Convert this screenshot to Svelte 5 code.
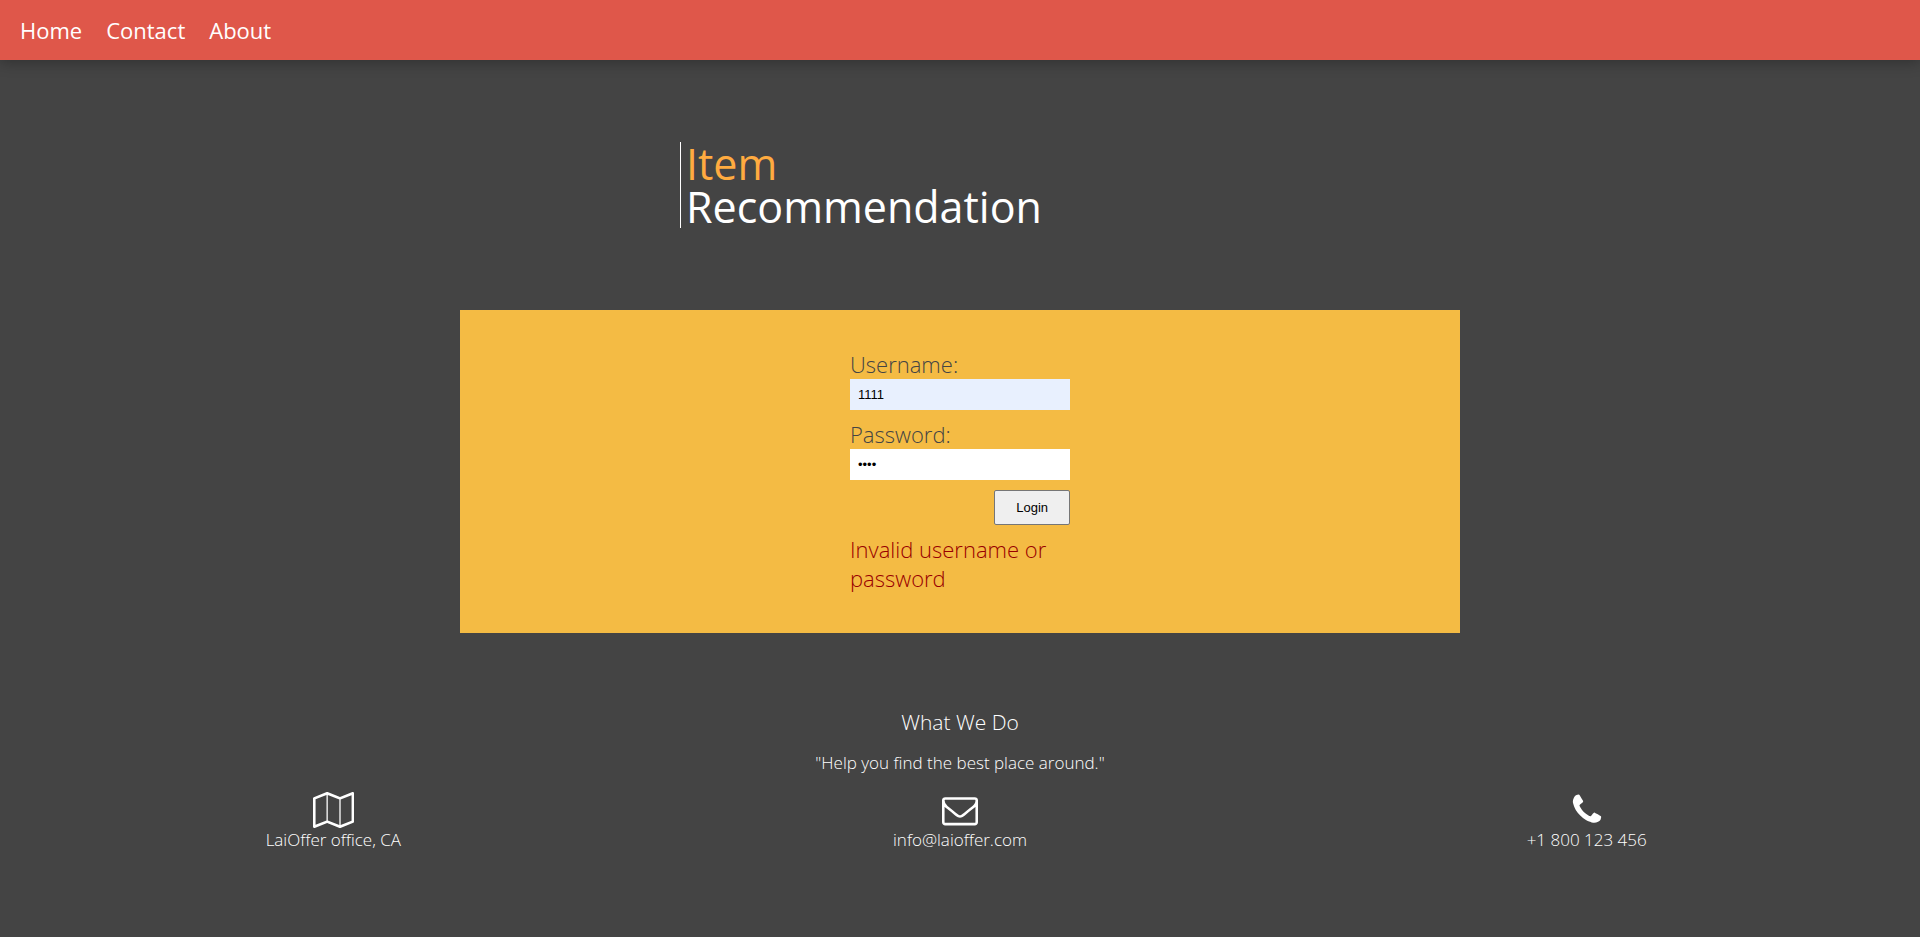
<script>
  let username = $state('1111');
  let password = $state('1111');
  const links = ['Home', 'Contact', 'About'];
  const contacts = [
    {
      text: 'LaiOffer office, CA',
      viewBox: '0 0 2048 1792',
      path: 'M2020 11q28 20 28 53v1408q0 20-11 36t-29 23l-640 256q-24 11-48 0l-616-246-616 246q-10 5-24 5-19 0-36-11-28-20-28-53v-1408q0-20 11-36t29-23l640-256q24-11 48 0l616 246 616-246q32-13 60 6zm-1284 135v1270l576 230v-1270zm-608 217v1270l544-217v-1270zm1792 1066v-1270l-544 217v1270z'
    },
    {
      text: 'info@laioffer.com',
      viewBox: '0 0 1792 1792',
      path: 'M1664 1504v-768q-32 36-69 66-268 206-426 338-51 43-83 67t-86.500 48.500-102.500 24.500h-2q-48 0-102.500-24.500t-86.500-48.500-83-67q-158-132-426-338-37-30-69-66v768q0 13 9.500 22.500t22.500 9.500h1472q13 0 22.500-9.500t9.500-22.500zm0-1051v-24.500l-.5-13-3-12.500-5.500-9-9-7.500-14-2.500h-1472q-13 0-22.500 9.500t-9.500 22.500q0 168 147 284 193 152 401 317 6 5 35 29.500t46 37.500 44.500 31.500 50.500 27.500 43 9h2q20 0 43-9t50.500-27.500 44.500-31.500 46-37.500 35-29.500q208-165 401-317 54-43 100.500-115.500t46.500-131.500zm128-37v1088q0 66-47 113t-113 47h-1472q-66 0-113-47t-47-113v-1088q0-66 47-113t113-47h1472q66 0 113 47t47 113z'
    },
    {
      text: '+1 800 123 456',
      viewBox: '0 0 1792 1792',
      path: 'M1600 1240q0 27-10 70.500t-21 68.500q-21 50-122 106-94 51-186 51-27 0-52.500-3.500t-57.500-12.500-47.500-14.500-55.500-20.500-49-18q-98-35-175-83-128-79-264.500-215.500t-215.500-264.500q-48-77-83-175-3-9-18-49t-20.500-55.500-14.500-47.500-12.500-57.500-3.500-52.500q0-92 51-186 56-101 106-122 25-11 68.500-21t70.500-10q14 0 21 3 18 6 53 76 11 19 30 54t35 63.500 31 53.500q3 4 17.500 25t21.500 35.500 7 28.500q0 20-28.500 50t-62 55-62 53-28.500 46q0 9 5 22.500t8.500 20.500 14 24 11.500 19q76 137 174 235t235 174q2 1 19 11.500t24 14 20.500 8.500 22.500 5q18 0 46-28.500t53-62 55-62 50-28.500q14 0 28.500 7t35.500 21.500 25 17.500q25 15 53.500 31t63.500 35 54 30q70 35 76 53 3 7 3 21z'
    }
  ];
</script>

<nav>
  {#each links as link}
    <a href="#{link.toLowerCase()}">{link}</a>
  {/each}
</nav>

<header>
  <h1>
    <span class="accent">Item</span>
    <span>Recommendation</span>
  </h1>
</header>

<main>
  <form onsubmit={(e) => e.preventDefault()}>
    <label for="username">Username:</label>
    <input id="username" class="filled" type="text" bind:value={username} />
    <label for="password">Password:</label>
    <input id="password" type="password" bind:value={password} />
    <button type="submit">Login</button>
    <p class="error" role="alert">Invalid username or password</p>
  </form>
</main>

<footer>
  <h2>What We Do</h2>
  <p>"Help you find the best place around."</p>
  <ul>
    {#each contacts as contact}
      <li>
        <svg viewBox={contact.viewBox} aria-hidden="true"><path d={contact.path} /></svg>
        <span>{contact.text}</span>
      </li>
    {/each}
  </ul>
</footer>

<style>
  :global(body) {
    margin: 0;
    background: #444;
    color: #fff;
    font-family: 'Open Sans', sans-serif;
    font-weight: 300;
  }

  nav {
    display: flex;
    align-items: center;
    gap: 24px;
    height: 60px;
    padding: 0 20px;
    background: #df574a;
    box-shadow: 0 2px 14px rgba(0, 0, 0, 0.3);
  }

  nav a {
    color: #fff;
    font-size: 22px;
    font-weight: 400;
    line-height: 30px;
    text-decoration: none;
  }

  header {
    max-width: 560px;
    margin: 82px auto;
  }

  h1 {
    margin: 0;
    padding-left: 5px;
    border-left: 1px solid #fff;
    font-size: 43px;
    font-weight: 400;
    line-height: 43px;
  }

  h1 span {
    display: block;
  }

  .accent {
    color: #ffab40;
  }

  main {
    box-sizing: border-box;
    max-width: 1000px;
    margin: 0 auto;
    padding: 40px 20px;
    background: #f4bb44;
  }

  form {
    display: flex;
    flex-direction: column;
    max-width: 220px;
    margin: 0 auto;
    color: #444;
    font-size: 22px;
    line-height: 29px;
  }

  input {
    box-sizing: border-box;
    height: 31px;
    margin: 0 0 10px;
    padding: 8px;
    border: 0;
    background: #fff;
    color: #000;
    font: 13px 'Liberation Sans', Arial, sans-serif;
  }

  .filled {
    background: #e8f0fe;
  }

  button {
    align-self: flex-end;
    box-sizing: border-box;
    height: 35px;
    padding: 0 21px;
    border: 1px solid #767676;
    border-radius: 2px;
    background: #efefef;
    color: #000;
    font: 13px 'Liberation Sans', Arial, sans-serif;
  }

  .error {
    margin: 10px 0 0;
    color: #900;
  }

  footer {
    padding: 75px 20px;
    text-align: center;
    font-size: 17px;
    line-height: 24px;
  }

  h2 {
    margin: 0 0 15px;
    font-size: 21px;
    font-weight: 300;
    line-height: 28px;
  }

  footer p {
    margin: 0;
  }

  ul {
    display: grid;
    grid-template-columns: repeat(3, 1fr);
    margin: 17px 0 0;
    padding: 0;
    list-style: none;
  }

  li {
    display: flex;
    flex-direction: column;
    align-items: center;
  }

  svg {
    height: 36px;
    fill: #fff;
  }
</style>
